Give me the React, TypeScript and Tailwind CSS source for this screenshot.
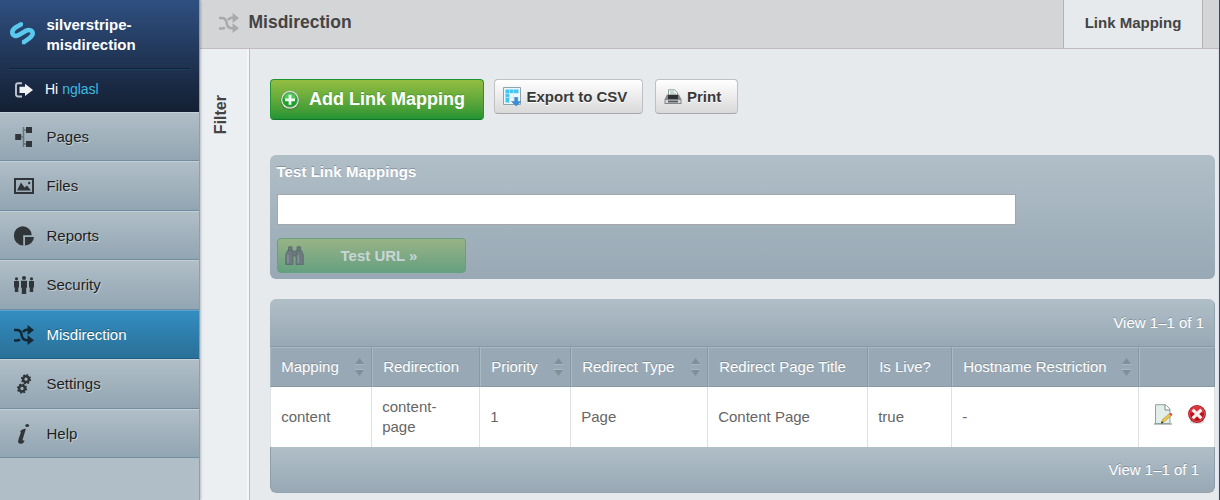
import type { ReactNode } from 'react';

const ink = '#2f3538';

function Shuffle({ color }: { color: string }) {
  return (
    <svg width="20" height="20" viewBox="0 0 20 20" fill="none" stroke={color} strokeWidth="2.500">
      <path d="M0 5h3c3.200 0 4.200 2 4.600 4.800s1.600 5.400 4.800 5.400H15" />
      <path d="M0 15.600h2.600c1.400 0 2.500-.3 3.300-1.200M9 7.200c.9-1.500 2.100-2.400 4-2.400h2" />
      <path d="M13.600 0 20 4.900l-6.400 5zM13.600 10.200 20 15.200 13.600 20z" fill={color} stroke="none" />
    </svg>
  );
}

function PagesIcon() {
  return (
    <svg width="20" height="20" viewBox="0 0 20 20" fill={ink}>
      <path d="M1.200 7h6v6h-6zM12 0h6v6h-6zM12 14h6v6h-6z" />
      <path d="M7 10h2.800M12 3H9.500M12 17H9.500M9.500 0v20" stroke="#66747c" strokeWidth="1.500" fill="none" />
    </svg>
  );
}

function FilesIcon() {
  return (
    <svg width="20" height="16" viewBox="0 0 20 16" fill={ink}>
      <path d="M0 0h20v16H0zM2 2v12h16V2z" fillRule="evenodd" />
      <path d="M3 12.600 7 4.600l3.500 5 2.500-2 4 5z" />
      <circle cx="15.200" cy="5" r="1.200" />
    </svg>
  );
}

function ReportsIcon() {
  return (
    <svg width="20" height="20" viewBox="0 0 20 20" fill={ink}>
      <path d="M8.800.2A9 9 0 0 0 0 9.500a9.500 9.500 0 0 0 9.200 10V9.300h8.500A9 9 0 0 0 8.800.2z" />
      <path d="M11 11h9a9 9 0 0 1-9 8.600z" />
    </svg>
  );
}

function SecurityIcon() {
  return (
    <svg width="20" height="18" viewBox="0 0 20 18" fill={ink}>
      <circle cx="2.500" cy="2.800" r="1.600" />
      <circle cx="10" cy="2" r="2" />
      <circle cx="17.500" cy="2.800" r="1.600" />
      <path d="M0 5h5v6.500H4.300V16H.8v-4.500H0zM7 4.700h6v7h-.8V18H7.800v-6.300H7zM15 5h5v6.500h-.8V16h-3.500v-4.500H15z" />
    </svg>
  );
}

function SettingsIcon() {
  return (
    <svg width="20" height="20" viewBox="0 0 20 20" fill="none" stroke={ink}>
      <circle cx="12" cy="5.200" r="2.900" strokeWidth="2.500" />
      <circle cx="12" cy="5.200" r="4.400" strokeWidth="1.500" strokeDasharray="1.730 1.730" />
      <circle cx="8" cy="14.500" r="2.900" strokeWidth="2.500" />
      <circle cx="8" cy="14.500" r="4.400" strokeWidth="1.500" strokeDasharray="1.730 1.730" />
    </svg>
  );
}

function HelpIcon() {
  return (
    <svg width="20" height="20" viewBox="0 0 20 20" fill={ink}>
      <ellipse cx="13.200" cy="1.500" rx="1.900" ry="1.500" />
      <path d="M6.200 7.200c1.400-1.700 3.200-2.600 5.700-2.500L8.700 15.200c-.3 1 .1 1.500 1.800 1.300-.4 2-1.700 3.300-3.700 3.300-2.300 0-3.200-1.400-2.500-3.800L6.800 8.400z" />
    </svg>
  );
}

function MenuItem({ icon, label, tall, active }: { icon: ReactNode; label: string; tall?: boolean; active?: boolean }) {
  const tone = active
    ? 'border-t-[#55a4d2] border-b-[#1f5d85] bg-linear-to-b from-[#338dc1] to-[#2a7098] text-white [text-shadow:0_-1px_0_#1d5a7c]'
    : 'border-t-[#c2d0d9] border-b-[#748d9d] bg-linear-to-b from-[#b0bec7] to-[#92a5b2] text-[#1f1f1f] [text-shadow:1px_1px_0_#bfcdd6]';
  return (
    <li className={`flex items-center border-t border-b ${tall ? 'h-[50px]' : 'h-[49px]'} ${tone}`}>
      <span className="ml-3.5 flex w-5 justify-center">{icon}</span>
      <span className={tall ? 'ml-[12.5px]' : 'ml-[12.5px] pt-[2px]'}>{label}</span>
    </li>
  );
}

function Sidebar() {
  return (
    <aside className="z-10 flex w-[200px] shrink-0 flex-col border-r border-[#999b9d] bg-[#b0bec7] shadow-[1px_0_2px_rgba(0,0,0,0.22)]">
      <div className="h-28 bg-linear-to-b from-[#2f5081] to-[#141f33] text-white">
        <div className="mx-[9px] flex h-[69px] border-b border-[#132035]">
          <svg className="mt-[20px] ml-px shrink-0" width="25" height="26" viewBox="0 0 25 26" fill="none" stroke="#5bc9ee" strokeWidth="4.6">
            <path d="M12 3.800C7.500 6.200 2.300 8.600 2.300 12.200c0 3.400 3.700 4.500 6.500 2.900L16 10.800c3-1.700 6.700-.6 6.700 2.800 0 3.600-5.200 5.700-9.700 9.200" />
            <path d="M11.800 2.500v2.800M13.200 20.500v3.800" strokeWidth="2.500" />
          </svg>
          <div className="ml-[11.5px] pt-[15px] text-[15px] leading-5 font-bold">silverstripe-<br />misdirection</div>
        </div>
        <div className="mx-[9px] flex h-[41px] items-center border-t border-[#17455f]">
          <svg className="ml-[6px]" width="18" height="16" viewBox="0 0 18 16" fill="none">
            <path d="M7 1.200H3.200Q1 1.200 1 3.500v8.800q0 2.200 2.200 2.200H7" stroke="#bfc6cf" strokeWidth="1.900" />
            <path d="M4.500 4.800H10V1.700L18 8l-8 6v-3H4.500z" fill="#f1f2f4" />
          </svg>
          <span className="ml-3 pb-[2px] text-sm">Hi <span className="text-[#3ebae0]">nglasl</span></span>
        </div>
      </div>
      <ul className="text-[15px]">
        <MenuItem icon={<PagesIcon />} label="Pages" />
        <MenuItem icon={<FilesIcon />} label="Files" tall />
        <MenuItem icon={<ReportsIcon />} label="Reports" />
        <MenuItem icon={<SecurityIcon />} label="Security" tall />
        <MenuItem icon={<Shuffle color="#122835" />} label="Misdirection" active />
        <MenuItem icon={<SettingsIcon />} label="Settings" tall />
        <MenuItem icon={<HelpIcon />} label="Help" />
      </ul>
    </aside>
  );
}

function Actions() {
  const plain = 'flex h-[35px] items-center rounded-[4px] border border-[#c0c0c2] border-b-[#a9a9ab] bg-linear-to-b from-white to-[#d9d9d9] text-[15px] font-bold text-[#393939] [text-shadow:0_1px_0_#fff]';
  return (
    <div className="flex h-[41px] items-start">
      <button className="flex h-[41px] w-[214px] items-center rounded-[4px] border border-[#1f9433] border-b-[#14762a] bg-linear-to-b from-[#93be42] to-[#1f9433] text-lg font-bold text-white [text-shadow:0_-1px_0_#4e9a37]">
        <svg className="mt-px ml-[9px]" width="20" height="20" viewBox="0 0 20 20">
          <circle cx="10" cy="10.500" r="9.400" fill="#3b7c2f" />
          <circle cx="10" cy="9.800" r="9" fill="#dce3d8" />
          <circle cx="10" cy="9.800" r="7.300" fill="#16a526" stroke="#5f8d57" strokeWidth=".8" />
          <path d="M4 9a6 6 0 0 1 12 0z" fill="#51c957" />
          <path d="M8.600 4.800h2.800v3.600H15v2.800h-3.600v3.600H8.600v-3.600H5V8.400h3.600z" fill="#f2f8f2" />
        </svg>
        <span className="ml-[9px] pb-[2px]">Add Link Mapping</span>
      </button>
      <button className={`ml-[10px] w-[149px] ${plain}`}>
        <svg className="ml-2" width="19" height="20" viewBox="0 0 19 20">
          <path d="M.5.500h17v17H.5z" fill="#eaf7fc" stroke="#8fa3ad" />
          <path d="M2.500 2.500h13v3.500h-9v9.500h-4z" fill="#43c5f3" />
          <path d="M6.500 2v14M10.500 2v14M2 6.500h14M2 10.500h14" stroke="#c3e8f5" strokeWidth=".7" />
          <path d="M11.700 10.500h3v4H18L13.200 19l-4.800-4.500h3.300z" fill="#398dd2" stroke="#4784bd" strokeWidth=".6" />
        </svg>
        <span className="ml-[4.5px] pt-[2px]">Export to CSV</span>
      </button>
      <button className={`ml-3 w-[83px] ${plain}`}>
        <svg className="ml-2" width="18" height="16" viewBox="0 0 18 16">
          <path d="M4.500 7V.8h6l3 3V7z" fill="#f5f9f7" stroke="#81938e" strokeWidth=".9" />
          <path d="M6 3h4M6 5h6" stroke="#8eb6aa" />
          <path d="M3 5.500h12l2.500 5V15H.5v-4.500z" fill="#85878a" />
          <path d="M4 6h10v4H4z" fill="#303234" />
          <path d="M1.500 11h15v3h-15z" fill="#d6d8d9" />
          <path d="M4 11.500h10v2H4z" fill="#5d6062" />
        </svg>
        <span className="ml-[5px] pt-[2px]">Print</span>
      </button>
    </div>
  );
}

function TestPanel() {
  return (
    <section className="mt-[35px] h-[124px] rounded-md bg-linear-to-b from-[#b0bec7] to-[#98a9b5] pl-[7px]">
      <h2 className="-ml-[0.5px] pt-[7px] text-[15px] leading-5 font-bold tracking-[0.05px] text-white [text-shadow:0_-1px_0_#82929e]">Test Link Mappings</h2>
      <input className="mt-3 block h-[31px] w-[739px] border border-[#a3a7aa] bg-white outline-none" aria-label="URL" />
      <button className="mt-[13px] flex h-[35px] w-[189px] items-center rounded-[4px] border border-[#65a080] bg-linear-to-b from-[#98b386] to-[#65a080] text-[15px] font-bold text-[#c8d5d6]">
        <svg className="ml-[7px]" width="19" height="20" viewBox="0 0 19 20" fill="#6d7a80" stroke="#5c696f" strokeWidth=".8">
          <path d="M3.500.8h3.500v3.500H3.500zM12 .8h3.500v3.500H12zM7.500 5h4v5h-4z" />
          <path d="M2.500 4.500h5l.5 4.500v9.500H.7V9zM11.500 4.500h5l1.800 4.500v9.500H11V9z" />
          <path d="M3 9v8M13.300 9v8" stroke="#87949a" strokeWidth="1.500" />
        </svg>
        <span className="ml-[36.5px] pt-[2px]">Test URL »</span>
      </button>
    </section>
  );
}

const columns = [
  { title: 'Mapping', value: 'content', sortable: true },
  { title: 'Redirection', value: 'content-page', sortable: false },
  { title: 'Priority', value: '1', sortable: true },
  { title: 'Redirect Type', value: 'Page', sortable: true },
  { title: 'Redirect Page Title', value: 'Content Page', sortable: false },
  { title: 'Is Live?', value: 'true', sortable: false },
  { title: 'Hostname Restriction', value: '-', sortable: true },
];

const grid = 'grid grid-cols-[102px_108px_91px_137px_160px_84px_187px_76px]';

function SortArrows() {
  return (
    <svg className="mr-[7px] ml-auto" width="9" height="18" viewBox="0 0 9 18">
      <path d="M0 6 4.500 0 9 6zM0 12h9l-4.500 6z" fill="#80909a" />
      <path d="M0 6.500h9M0 11.500h9" stroke="#a9b9c3" />
    </svg>
  );
}

function MappingTable() {
  return (
    <section className="mt-5 h-[194px] overflow-hidden rounded-md text-[15px]">
      <div className="flex h-12 items-center justify-end border-r border-b border-r-[#93a4b0] border-b-[#8799a6] bg-linear-to-b from-[#b0bec7] to-[#98a9b5] pt-[2px] pr-[10px] text-white [text-shadow:0_-1px_0_#82929e]">View 1–1 of 1</div>
      <div className={`h-10 ${grid} bg-[#98a9b5] text-white [text-shadow:0_-1px_0_#7e8e9a]`}>
        {columns.map((c) => (
          <div key={c.title} className="flex items-center border border-t-[#a8b9c3] border-r-[#8799a6] border-b-[#8799a6] border-l-[#a8b9c3] pl-[10.2px] whitespace-nowrap">
            <span>{c.title}</span>
            {c.sortable && <SortArrows />}
          </div>
        ))}
        <div className="border border-t-[#a8b9c3] border-r-[#8799a6] border-b-[#8799a6] border-l-[#a8b9c3]" />
      </div>
      <div className={`h-[60px] ${grid} bg-white leading-5 text-[#666]`}>
        {columns.map((c, i) => (
          <div key={c.title} className={`flex items-center border-r border-[#dfe1e2] pr-4 pl-[10.2px] ${i === 0 ? 'border-l' : ''}`}>{c.value}</div>
        ))}
        <div className="flex items-start border-r border-[#dfe1e2] pt-[17px] pl-[14px]">
          <svg width="20" height="21" viewBox="0 0 20 21">
            <path d="M1 20h18" stroke="#a9afad" strokeWidth="1.300" />
            <path d="M2.500.7h10L17 5v14.500H2.500z" fill="#e3eeeb" stroke="#8da39c" />
            <path d="M12 .8V6h5" fill="#fff" stroke="#758c84" />
            <path d="m8.500 18.500 1-3 7-6 2 2-7 6z" fill="#e8c646" stroke="#b08d3c" strokeWidth=".6" />
            <path d="m16 10 2-1.300 1.500 1.700-1.400 1.500z" fill="#e74255" />
            <path d="m8 19.500.8-2.300 1.800 1.500z" fill="#222" />
          </svg>
          <svg className="ml-[14px]" width="20" height="20" viewBox="0 0 20 20">
            <ellipse cx="10" cy="17.800" rx="7.500" ry="2" fill="#d6d6d6" />
            <circle cx="10" cy="10" r="8.900" fill="#b30f18" />
            <circle cx="10" cy="10" r="7.500" fill="#c00f19" stroke="#d55a5f" />
            <path d="M3.500 9a6.500 6.500 0 0 1 13 0z" fill="#d8353d" />
            <path d="m6.800 6.800 6.400 6.400m0-6.400-6.400 6.400" stroke="#f6f1f1" strokeWidth="3.200" strokeLinecap="square" />
          </svg>
        </div>
      </div>
      <div className="flex h-[46px] items-center justify-end rounded-b-md border-x border-b border-x-[#8c9eaa] border-b-[#93a4b0] bg-linear-to-b from-[#b0bec7] to-[#98a9b5] pt-[2px] pr-[15px] text-white [text-shadow:0_-1px_0_#82929e]">View 1–1 of 1</div>
    </section>
  );
}

export default function App() {
  return (
    <div className="flex h-[500px] w-[1220px] overflow-hidden bg-[#e6eaed] font-['Liberation_Sans',Arial,sans-serif]">
      <Sidebar />
      <main className="flex min-w-0 flex-1 flex-col border-r border-[#2a4b7c]">
        <header className="flex h-[49px] shrink-0 border-b border-[#c1babe] bg-[#d4d5d7]">
          <div className="mt-[13px] ml-[19px]"><Shuffle color="#a9aaac" /></div>
          <h1 className="mt-[9px] ml-[9.5px] text-[17.5px] leading-[26px] font-bold text-[#444]">Misdirection</h1>
          <div className="mr-4 ml-auto flex w-[140px] justify-center border-x border-[#b3b3b5] bg-[#e6eaed] pt-[13px] text-[15px] leading-5 font-bold text-[#444]">Link Mapping</div>
        </header>
        <div className="flex min-h-0 flex-1 border-r border-[#dddfe8]">
          <div className="flex w-[50px] shrink-0 border-r border-[#c1babe] bg-[#ebeff2] shadow-[inset_-2px_0_0_#f6f7f8]">
            <span className="mt-[46px] ml-[11px] h-fit rotate-180 text-base leading-5 font-bold text-[#444] [writing-mode:vertical-rl]">Filter</span>
          </div>
          <div className="ml-5 w-[945px] shrink-0 pt-[30px]">
            <Actions />
            <TestPanel />
            <MappingTable />
          </div>
        </div>
      </main>
    </div>
  );
}
